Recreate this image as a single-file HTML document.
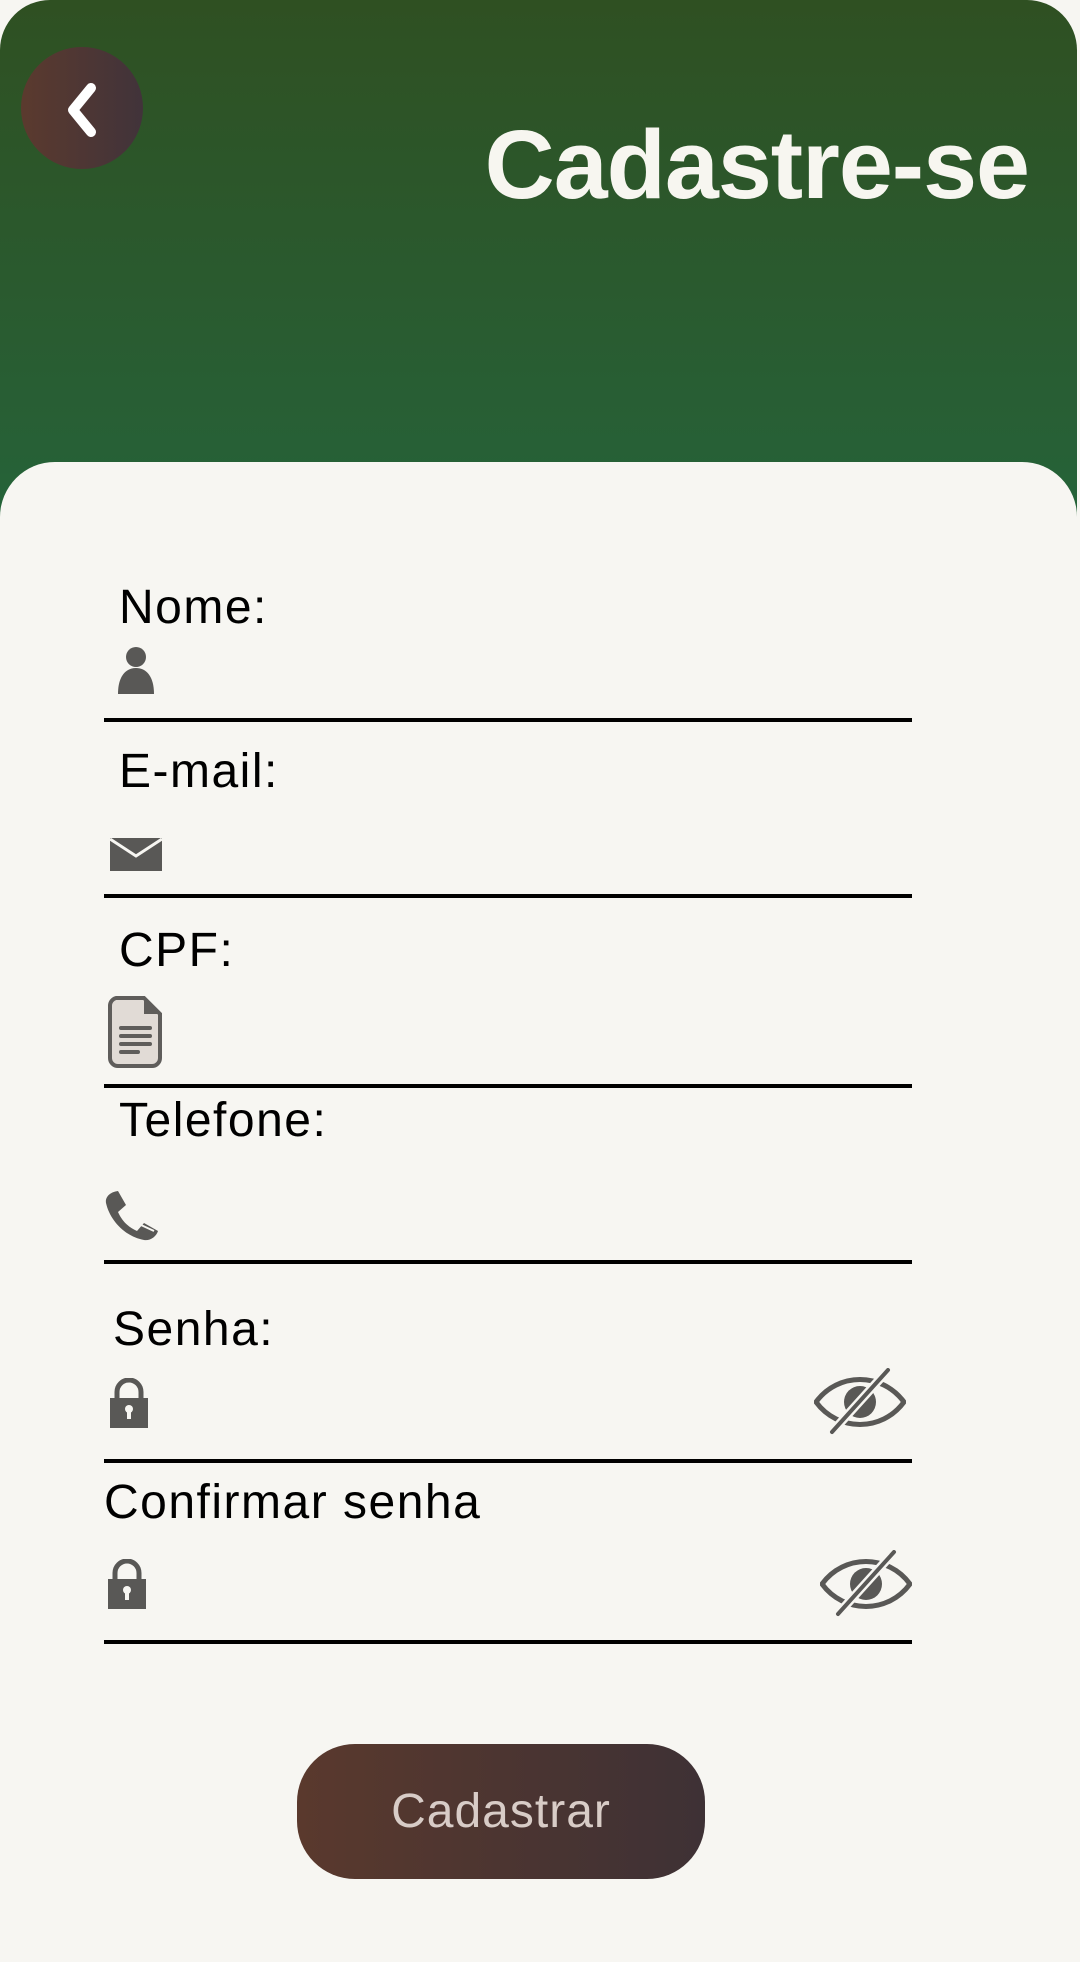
<!DOCTYPE html>
<html><head><meta charset="utf-8"><style>
*{margin:0;padding:0;box-sizing:border-box}
body{width:1080px;height:1920px;background:#f7f6f2;position:relative;overflow:hidden;font-family:"Liberation Sans",sans-serif}
.hdr{position:absolute;left:0;top:0;width:1077px;height:560px;border-radius:50px 50px 0 0;background:linear-gradient(180deg,#2f5022 0%,#276036 80%,#22663a 100%)}
.card{position:absolute;left:0;top:462px;width:1077px;height:1500px;background:#f7f6f2;border-radius:55px 55px 0 0}
.back{position:absolute;left:21px;top:47px;width:122px;height:122px;border-radius:50%;background:linear-gradient(90deg,#5b3a2e,#41333a)}
.title{position:absolute;right:51px;top:116px;font-size:97px;font-weight:bold;color:#f7f6f0;line-height:1;letter-spacing:-1px}
.lbl{position:absolute;font-size:48px;color:#000;line-height:1;letter-spacing:1.5px}
.ln{position:absolute;left:104px;width:808px;height:4px;background:#000}
svg{position:absolute}
.btn{position:absolute;left:297px;top:1744px;width:408px;height:135px;border-radius:58px;background:linear-gradient(90deg,#5a392d,#3e3135);color:#d8ccc7;font-size:48px;letter-spacing:1px;text-align:center;line-height:135px}
</style></head><body>
<div class="hdr"></div>
<div class="card"></div>
<div class="back"><svg style="left:40px;top:35px" width="40" height="56" viewBox="0 0 40 56"><path d="M30 6 L12 28 L30 50" fill="none" stroke="#fff" stroke-width="10" stroke-linecap="round" stroke-linejoin="round"/></svg></div>
<div class="title">Cadastre-se</div>

<div class="lbl" style="left:119px;top:584px">Nome:</div>
<svg style="left:118px;top:646px" width="38" height="50" viewBox="0 0 38 50"><circle cx="18" cy="11" r="10" fill="#595856"/><path d="M0 48 C0 30 8 22 18 22 C28 22 36 30 36 48 Z" fill="#595856"/></svg>
<div class="ln" style="top:718px"></div>

<div class="lbl" style="left:119px;top:748px">E-mail:</div>
<svg style="left:110px;top:838px" width="52" height="34" viewBox="0 0 52 34"><rect x="0" y="0" width="52" height="33" fill="#595856"/><path d="M0 1 L26 18 L52 1" fill="none" stroke="#f7f6f2" stroke-width="3"/></svg>
<div class="ln" style="top:894px"></div>

<div class="lbl" style="left:119px;top:927px">CPF:</div>
<svg style="left:108px;top:996px" width="56" height="72" viewBox="0 0 56 72"><path d="M8 2 H36 L52 18 V62 A8 8 0 0 1 44 70 H10 A8 8 0 0 1 2 62 V10 A8 8 0 0 1 8 2 Z" fill="#e1dbd6" stroke="#5f5d5b" stroke-width="4"/><path d="M36 2 V18 H52 Z" fill="#5f5d5b"/><g stroke="#5f5d5b" stroke-width="4" stroke-linecap="round"><path d="M13 32 H42"/><path d="M13 40 H42"/><path d="M13 48 H42"/><path d="M13 56 H30"/></g></svg>
<div class="ln" style="top:1084px"></div>

<div class="lbl" style="left:119px;top:1097px">Telefone:</div>
<svg style="left:104px;top:1189px" width="58" height="54" viewBox="0 0 58 54"><path d="M14 2 L22 16 L14 23 C18 32 24 38 33 42 L40 34 L54 42 C52 48 46 52 40 51 C22 48 6 32 2 14 C1 8 6 3 14 2 Z" fill="#595856"/><path d="M17 4 L24 15 M37 36 L50 42" stroke="#f7f6f2" stroke-width="2"/></svg>
<div class="ln" style="top:1260px"></div>

<div class="lbl" style="left:113px;top:1306px">Senha:</div>
<svg style="left:110px;top:1378px" width="38" height="50" viewBox="0 0 38 50"><path d="M7 21 V14 A12 12 0 0 1 31 14 V21" fill="none" stroke="#595856" stroke-width="5"/><rect x="0" y="20" width="38" height="30" fill="#595856"/><circle cx="19" cy="31" r="4" fill="#f7f6f2"/><rect x="17" y="32" width="4" height="9" fill="#f7f6f2"/></svg>
<svg style="left:814px;top:1368px" width="92" height="68" viewBox="0 0 92 68"><path d="M2 34 C24 4 68 4 90 34 C68 64 24 64 2 34 Z" fill="none" stroke="#595856" stroke-width="5"/><circle cx="46" cy="34" r="16" fill="#595856"/><path d="M18 64 L74 2" stroke="#f7f6f2" stroke-width="9"/><path d="M18 64 L74 2" stroke="#595856" stroke-width="4" stroke-linecap="round"/></svg>
<div class="ln" style="top:1459px"></div>

<div class="lbl" style="left:104px;top:1479px">Confirmar senha</div>
<svg style="left:108px;top:1559px" width="38" height="50" viewBox="0 0 38 50"><path d="M7 21 V14 A12 12 0 0 1 31 14 V21" fill="none" stroke="#595856" stroke-width="5"/><rect x="0" y="20" width="38" height="30" fill="#595856"/><circle cx="19" cy="31" r="4" fill="#f7f6f2"/><rect x="17" y="32" width="4" height="9" fill="#f7f6f2"/></svg>
<svg style="left:820px;top:1550px" width="92" height="68" viewBox="0 0 92 68"><path d="M2 34 C24 4 68 4 90 34 C68 64 24 64 2 34 Z" fill="none" stroke="#595856" stroke-width="5"/><circle cx="46" cy="34" r="16" fill="#595856"/><path d="M18 64 L74 2" stroke="#f7f6f2" stroke-width="9"/><path d="M18 64 L74 2" stroke="#595856" stroke-width="4" stroke-linecap="round"/></svg>
<div class="ln" style="top:1640px"></div>

<div class="btn">Cadastrar</div>
</body></html>
